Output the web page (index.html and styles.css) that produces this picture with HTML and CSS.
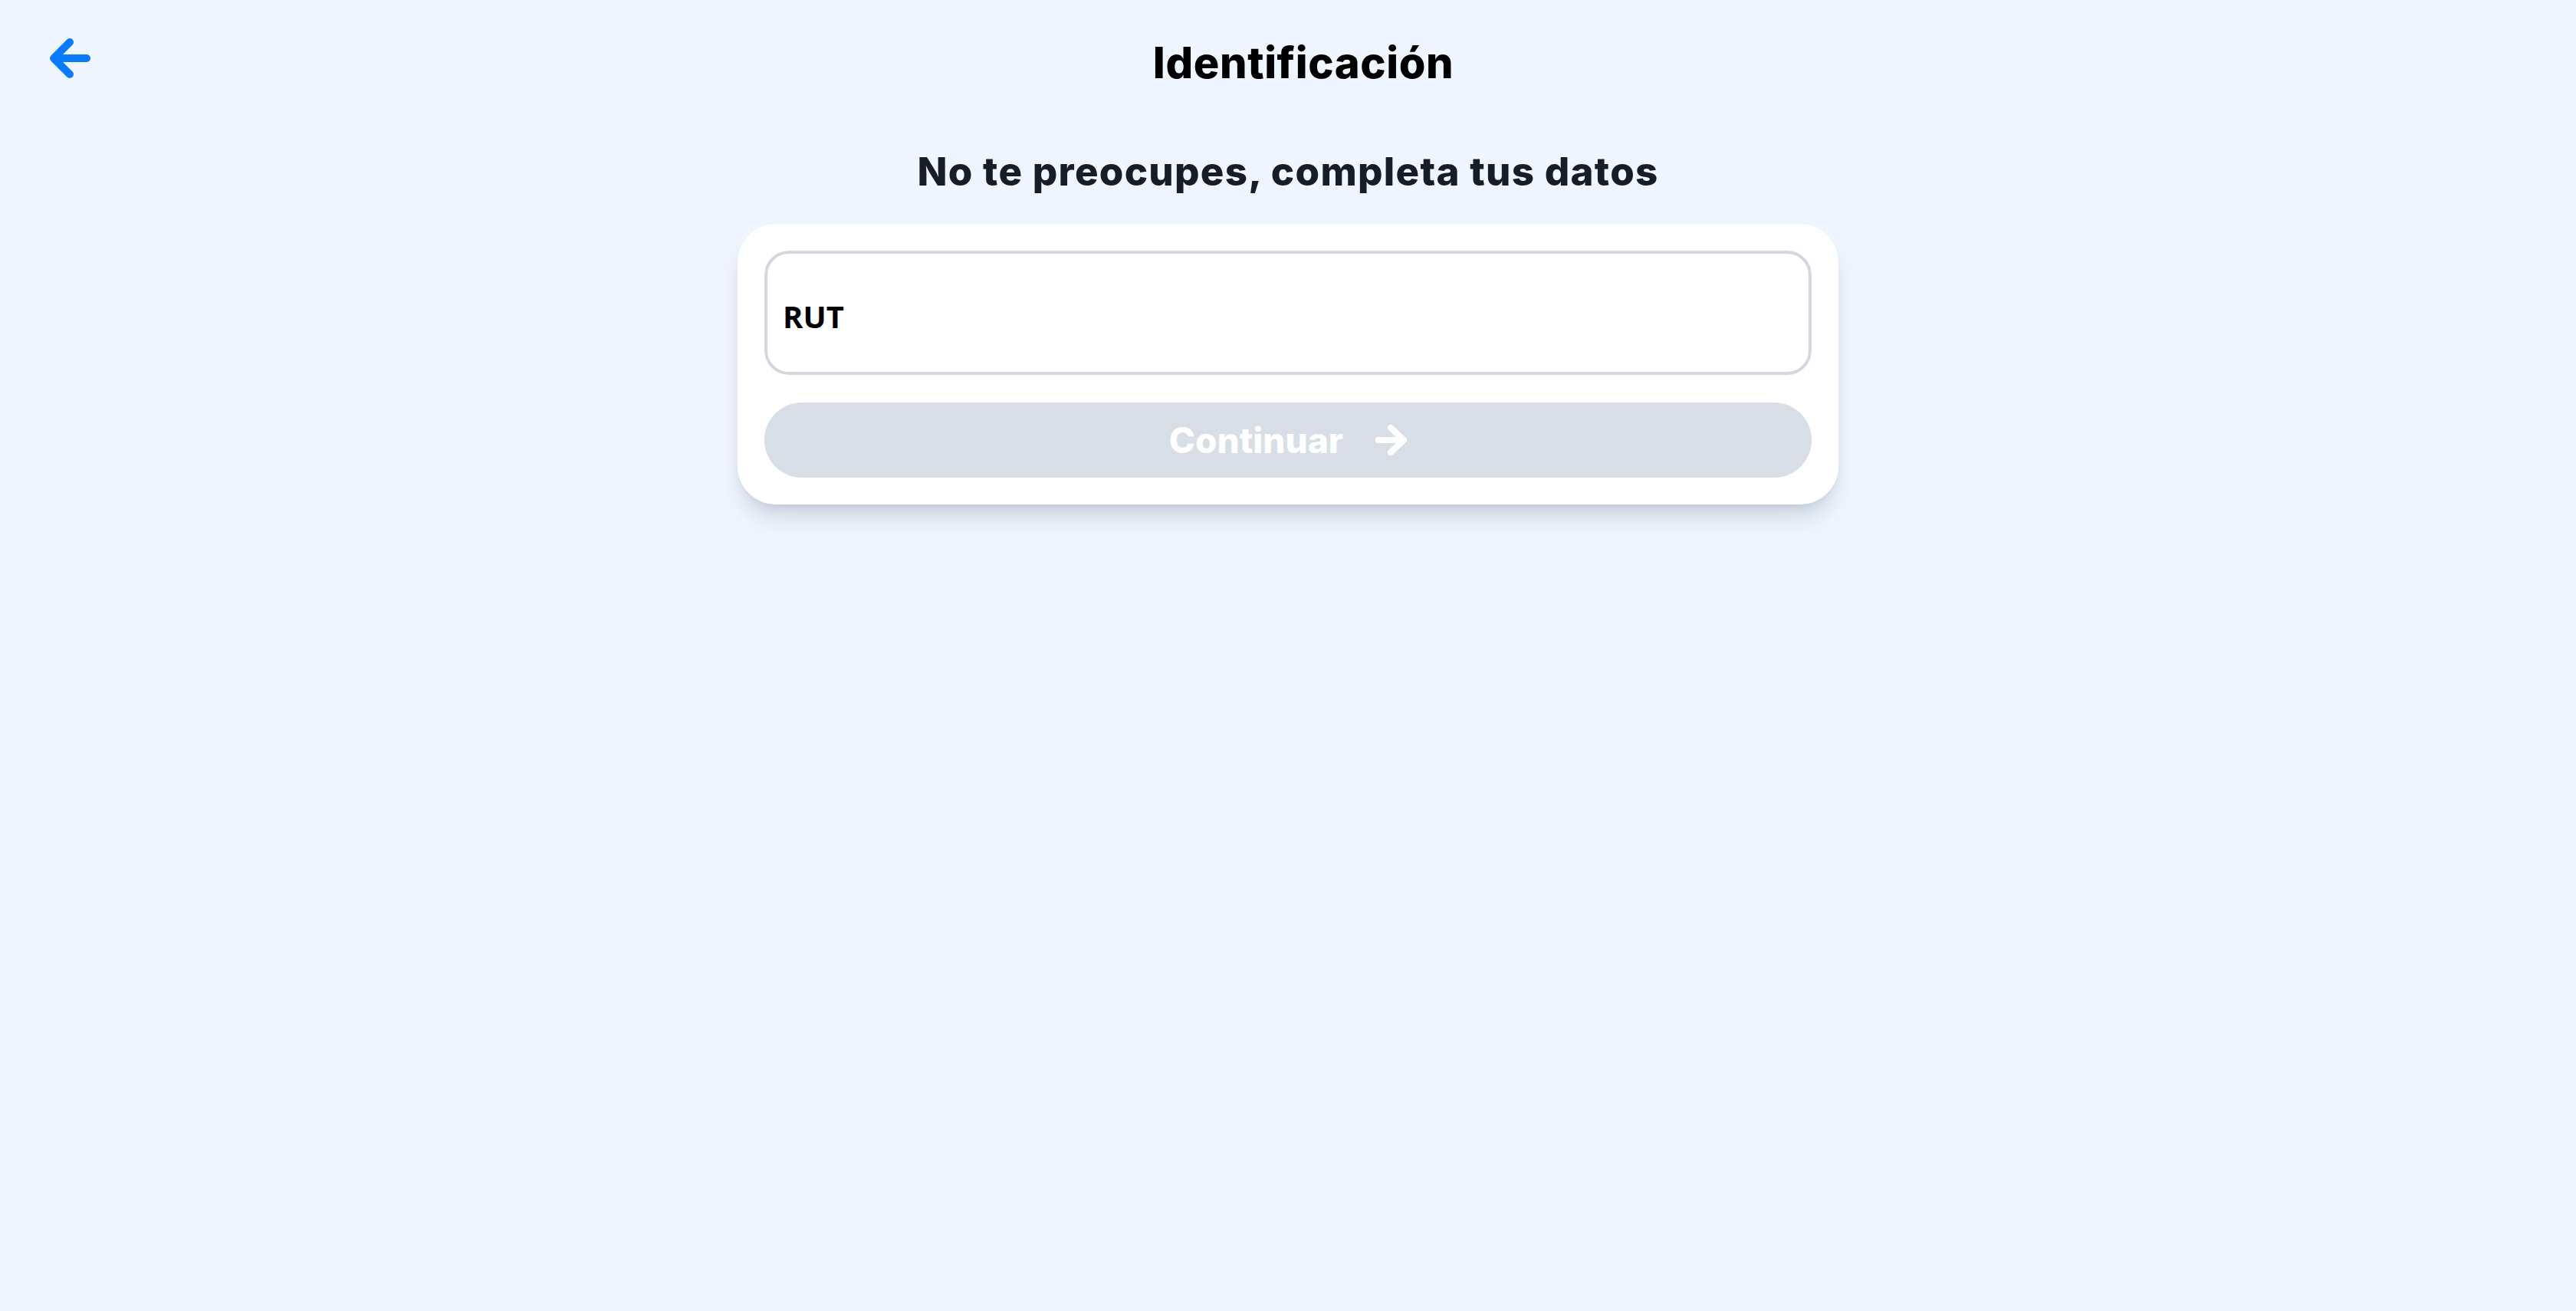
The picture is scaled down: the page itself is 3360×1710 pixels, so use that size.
FILE: index.html
```html
<!DOCTYPE html>
<html lang="es">
<head>
<meta charset="utf-8">
<title>Identificación</title>
<link rel="stylesheet" href="styles.css">
</head>
<body>
<header class="topbar">
  <button class="back" type="button" aria-label="Volver">
    <svg width="64" height="60" viewBox="0 0 64 60" fill="none" stroke="#0a7aff" stroke-width="10" stroke-linecap="round" stroke-linejoin="round">
      <path d="M53 30H10M31 9 10 30l21 21"/>
    </svg>
  </button>
  <h1 class="title">Identificación</h1>
</header>
<main class="content">
  <h2 class="subtitle">No te preocupes, completa tus datos</h2>
  <form class="card">
    <label class="field">
      <input class="field-input" type="text" placeholder="RUT">
    </label>
    <button class="continue" type="button" disabled>
      <span>Continuar</span>
      <svg width="41" height="40" viewBox="0 0 41 40" fill="none" stroke="#ffffff" stroke-width="8" stroke-linecap="round" stroke-linejoin="round">
        <path d="M4 20h33M20 4l17 16-17 16"/>
      </svg>
    </button>
  </form>
</main>
</body>
</html>
```
FILE: styles.css
```css
* { box-sizing: border-box; }

html, body {
  margin: 0;
  padding: 0;
}

body {
  background: #eff6ff;
  font-family: Inter, "Noto Sans", sans-serif;
  min-height: 100vh;
}

.topbar {
  display: flex;
  align-items: flex-start;
  padding: 46px 80px 0 60px;
}

.back {
  width: 60px;
  height: 60px;
  padding: 0;
  border: 0;
  background: transparent;
  display: flex;
  align-items: center;
  justify-content: flex-start;
  cursor: pointer;
}

.back svg {
  display: block;
  overflow: visible;
}

.title {
  flex: 1;
  margin: 8px 0 0;
  text-align: center;
  font-size: 56px;
  line-height: 56px;
  font-weight: 800;
  color: #000;
  letter-spacing: 0.6px;
}

.content {
  display: flex;
  flex-direction: column;
  align-items: center;
}

.subtitle {
  margin: 88px 0 0;
  font-size: 51px;
  line-height: 51px;
  font-weight: 800;
  color: #161d28;
  letter-spacing: 1.3px;
}

.card {
  margin-top: 43px;
  width: 1436px;
  padding: 35px;
  background: #fff;
  border-radius: 50px;
  box-shadow: 0 22px 33px -8px rgba(100, 116, 139, 0.28), 0 8px 14px -8px rgba(100, 116, 139, 0.22);
  display: flex;
  flex-direction: column;
  gap: 36px;
}

.field {
  display: block;
}

.field-input {
  display: block;
  width: 100%;
  height: 162px;
  border: 4px solid #d3d8df;
  border-radius: 32px;
  padding: 8px 20px 0;
  font-family: "Open Sans", "Noto Sans", sans-serif;
  font-size: 40px;
  font-weight: 700;
  color: #000;
  background: #fff;
  outline: none;
}

.field-input::placeholder {
  color: #000;
  opacity: 1;
}

.continue {
  height: 98px;
  border: 0;
  border-radius: 49px;
  background: #d7dee6;
  color: #fff;
  display: flex;
  align-items: center;
  justify-content: center;
  gap: 42px;
  font-family: Inter, "Noto Sans", sans-serif;
  font-size: 46px;
  font-weight: 800;
  padding: 0;
}

.continue svg {
  display: block;
}
```
